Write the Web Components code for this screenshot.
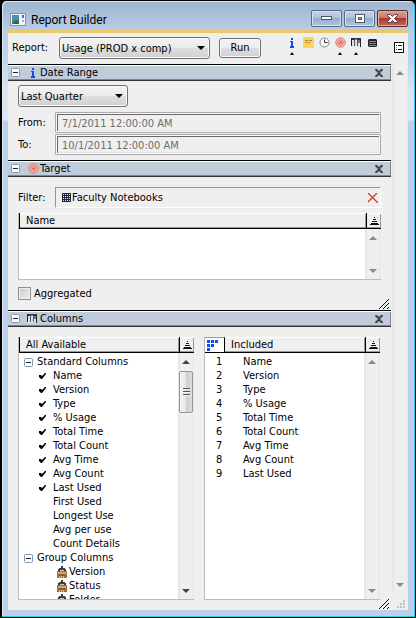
<!DOCTYPE html>
<html lang="en">
<head>
<meta charset="utf-8">
<title>Report Builder</title>
<style>
  html, body { height: 100%; margin: 0; background: #000; }
  body { font: 11px/14px Tahoma, "DejaVu Sans Condensed", "Open Sans", sans-serif; color: #000; }
</style>
</head>
<body>
<report-window></report-window>

<script>
const define = (name, html, setup) => {
  const tpl = document.createElement('template');
  tpl.innerHTML = `<style>*{box-sizing:border-box}:host{box-sizing:border-box}</style>` + html;
  customElements.define(name, class extends HTMLElement {
    connectedCallback() {
      if (this.shadowRoot) return;
      const root = this.attachShadow({ mode: 'open' });
      root.append(tpl.content.cloneNode(true));
      if (setup) setup(this, root);
    }
  });
};

const rect = (x, y, w, h, f) => `<rect x="${x}" y="${y}" width="${w}" height="${h}" fill="${f}"/>`;
const ICONS = {
  app: [16, 14, `<rect x=".5" y=".5" width="15" height="12" fill="#eef4f8" stroke="#8b9199"/><rect x="2" y="2" width="7" height="9" fill="#3f7f78"/><path d="M2 2h7v3l-4 4-3-2z" fill="#4d8fae"/><path d="M3 11l3-4 3 3v1z" fill="#2f6a3d"/>${rect(12,2,2,3,'#446eb5')}${rect(12,7,2,2,'#9fb1c9')}`],
  info: [6, 10, `${rect(2,0,2,2,'#0a4cf5')}${rect(1,3,3,1,'#0a4cf5')}${rect(2,3,2,6,'#0a4cf5')}${rect(1,9,4,1,'#0a4cf5')}${rect(1,8,4,1,'#0a4cf5')}`],
  note: [11, 11, `${rect(0,0,11,11,'#fad55a')}<path d="M2 3.5h3M6 3.5h3M2 5.500h2M5 5.500h2" stroke="#9b8646"/>`],
  clock: [11, 11, `<circle cx="5.5" cy="5.5" r="4.5" fill="#fafafa" stroke="#858585"/><path d="M5.500 2.500v3h3" fill="none" stroke="#333"/>`],
  target: [11, 11, `<circle cx="5.500" cy="5.500" r="4.700" fill="#f5c8c0" stroke="#df6a5d"/><circle cx="5.500" cy="5.500" r="2.700" fill="#f7d5cf" stroke="#db6254"/><circle cx="5.500" cy="5.500" r="1.200" fill="#d4473a"/>`],
  columns: [10, 9, `${rect(0,0,10,9,'#e0e0e8')}${rect(0,0,10,2,'#353542')}${rect(4,1,2,1,'#7b8fc0')}${rect(0,0,1,8,'#1c1c22')}${rect(3,2,1,6,'#55555f')}${rect(6,2,1,6,'#55555f')}${rect(9,1,1,8,'#24242a')}${rect(7,2,2,3,'#7b7b86')}`],
  stack: [9, 8, `<path d="M1 0h7l1 1v6l-1 1H1L0 7V1z" fill="#25202e"/>${rect(1,2,7,1,'#8f889c')}${rect(1,4,7,1,'#8f889c')}${rect(1,6,7,1,'#8f889c')}`],
  list: [10, 11, `<rect x=".5" y=".5" width="9" height="10" fill="#fff" stroke="#111"/>${rect(2,3,1,1,'#111')}${rect(4,3,4,1,'#111')}${rect(2,5,1,1,'#999')}${rect(2,7,1,1,'#111')}${rect(4,7,4,1,'#111')}`],
  minus: [9, 9, `<rect x=".5" y=".5" width="8" height="8" rx="1" fill="#fdfdfd" stroke="#829bb5"/>${rect(2,4,5,1,'#222')}`],
  close: [8, 8, `<path d="M0 0h2l2 2 2-2h2v1L5 4l3 3v1H6L4 6 2 8H0V7l3-3-3-3z" fill="#454545"/>`],
  delete: [10, 10, `<path d="M0 0l10 10M9 0L0 9" stroke="#d9341f" stroke-width="1.300"/>`],
  grid: [9, 9, `${rect(0,0,9,9,'#20243f')}${[1,3,5,7].map(y => [1,3,5,7].map(x => rect(x,y,1,1,'#dfe3f0')).join('')).join('')}`],
  sort: [9, 8, `${rect(4,0,1,1,'#111')}${rect(3,2,3,1,'#111')}${rect(2,4,5,1,'#111')}${rect(1,6,7,1,'#111')}${rect(0,7,9,1,'#111')}`],
  check: [7, 6, `<path d="M0 2h2l1 1 3-3h1v1L3 6H2L0 4z" fill="#000"/>`],
  up: [8, 4, `<path d="M4 0l4 4H0z" fill="currentColor"/>`],
  down: [8, 4, `<path d="M0 0h8L4 4z" fill="currentColor"/>`],
  tick: [4, 3, `<path d="M2 0l2 3H0z" fill="#000"/>`],
  grip: [10, 10, `<path d="M0 10L10 0M4 10l6-6M8 10l2-2" stroke="#111" fill="none"/>`],
  dots: [8, 8, [[6,0],[3,3],[6,3],[0,6],[3,6],[6,6]].map(p => rect(p[0],p[1],2,2,'#c2c2c2')).join('')],
  blocks: [11, 11, [[0,0],[4,0],[8,0],[0,4],[4,4],[0,8]].map(p => rect(p[0],p[1],3,3,'#0a4cf5')).join('')],
  lock: [10, 12, `<path d="M1 3h1V2h2V0h2v2h2v1h1v2H1z" fill="#3c3c40"/>${rect(3,4,4,1,'#c8cacd')}${rect(0,5,10,7,'#a06f3b')}${rect(1,6,8,2,'#d9a566')}${rect(2,8,6,2,'#8a5c30')}${rect(2,10,1,2,'#e3b67c')}${rect(4,10,1,2,'#e3b67c')}${rect(6,10,1,2,'#e3b67c')}`],
  min: [11, 5, `<rect x=".5" y=".5" width="10" height="3" fill="#fff" stroke="#4b5968"/>`],
  max: [10, 9, `<rect x=".5" y=".5" width="9" height="8" fill="#fff" stroke="#4b5968"/><rect x="3.500" y="3.500" width="3" height="2" fill="#8fa6c2" stroke="#4b5968"/>`],
  x: [11, 9, `<path d="M.5.5h3l2 2 2-2h3v1l-3 3 3 3v1h-3l-2-2-2 2h-3v-1l3-3-3-3z" fill="#fff" stroke="#5b3a3f"/>`]
};

define('ui-icon', `<style>:host{display:inline-flex;flex:none}svg{display:block}</style>`, (el, root) => {
  const [w, h, body] = ICONS[el.getAttribute('name')];
  root.innerHTML += `<svg width="${w}" height="${h}" viewBox="0 0 ${w} ${h}" aria-hidden="true">${body}</svg>`;
});

define('title-bar', `<style>
  :host{display:flex;align-items:flex-start;height:28px;padding:8px 0 0;gap:5px}
  ui-icon{margin:3px 0 0 2px}
  h1{margin:0;flex:1;font:12px/20px Roboto,sans-serif}
  div{display:flex;gap:2px;padding:0 1px}
  button{width:31px;height:17px;padding:0;border:1px solid #566a83;border-radius:2px;display:grid;place-items:center;
    background:linear-gradient(#c3d2e4,#afc2d8 48%,#94aecb 50%,#b0c6df);box-shadow:inset 0 0 0 1px #d5e1ee}
  button ui-icon{margin:0}
  .x{background:linear-gradient(#d9a096,#c87567 48%,#ab3a28 50%,#c16a58);box-shadow:inset 0 0 0 1px #e0ada5;border-color:#5a2c30}
</style>
<ui-icon name="app"></ui-icon><h1><slot></slot></h1>
<div><button aria-label="Minimize"><ui-icon name="min"></ui-icon></button><button aria-label="Maximize"><ui-icon name="max"></ui-icon></button><button class="x" aria-label="Close"><ui-icon name="x"></ui-icon></button></div>`);

const selectBox = (id, text, label) => `<span class="sel"><select id="${id}" ${label}><option>${text}</option></select><ui-icon name="down"></ui-icon></span>`;
const selectCss = `.sel{display:inline-grid;align-items:center}
  .sel>*{grid-area:1/1}
  .sel ui-icon{justify-self:end;margin-right:5px;pointer-events:none}
  select{appearance:none;width:100%;height:22px;margin:0;padding:2px 18px 0 2px;font:inherit;color:#000;border:1px solid #6f6f6f;border-radius:3px;
    background:linear-gradient(#f3f3f3,#ebebeb 48%,#dddddd 52%,#d1d1d1);box-shadow:inset 0 0 0 1px #fafafa}`;

define('report-toolbar', `<style>
  :host{display:flex;align-items:flex-start;height:31px;padding:4px 4px 0 4px}
  ${selectCss}
  label{line-height:22px;width:47px}
  .sel{width:151px}
  .run{width:42px;height:20px;margin:1px auto 0 9px;padding:0;font:inherit;border:1px solid #6f6f6f;border-radius:3px;
    background:linear-gradient(#f3f3f3,#ebebeb 48%,#dddddd 52%,#d1d1d1);box-shadow:inset 0 0 0 1px #fafafa}
  .tools{display:flex;gap:2px}
  .tools button,.menu{display:grid;grid-template-rows:11px 3px;row-gap:4px;justify-items:center;align-items:center;width:14px;padding:0;border:0;background:none}
  .menu{grid-template-rows:11px;margin:5px 0 0 15px;width:10px}
</style>
<label for="report">Report:</label>${selectBox('report', 'Usage (PROD x comp)', '')}
<button class="run">Run</button>
<div class="tools">
<button aria-label="Date range"><ui-icon name="info"></ui-icon><ui-icon name="tick"></ui-icon></button>
<button aria-label="Note"><ui-icon name="note"></ui-icon></button>
<button aria-label="Time"><ui-icon name="clock"></ui-icon></button>
<button aria-label="Target"><ui-icon name="target"></ui-icon><ui-icon name="tick"></ui-icon></button>
<button aria-label="Columns"><ui-icon name="columns"></ui-icon><ui-icon name="tick"></ui-icon></button>
<button aria-label="Data"><ui-icon name="stack"></ui-icon></button>
</div>
<button class="menu" aria-label="Options"><ui-icon name="list"></ui-icon></button>`);

define('panel-section', `<style>
  :host{display:flex;flex-direction:column;position:relative}
  header{display:flex;align-items:center;height:17px;flex:none;border-top:1px solid #000;border-bottom:1px solid #333;
    background:#c1ccda;box-shadow:inset 0 1px #fff,inset -1px -1px #858585;padding:0 8px 0 3px}
  button{display:grid;padding:0;border:0;background:none}
  .glyph{width:20px;display:flex;justify-content:flex-end;padding-right:1px}
  :host([icon=info]) .glyph{padding-right:4px}
  :host([icon=columns]) .glyph{padding-right:3px}
  h2{margin:0;flex:1;font:inherit;padding-top:1px}
  .body{padding:0 10px;flex:1;min-height:0;display:flex;flex-direction:column}
  .grip{position:absolute;right:2px;bottom:1px}
  .grip[hidden]{display:none}
</style>
<header><button aria-label="Collapse"><ui-icon name="minus"></ui-icon></button><span class="glyph"></span><h2></h2><button aria-label="Close"><ui-icon name="close"></ui-icon></button></header>
<div class="body"><slot></slot></div><ui-icon class="grip" name="grip"></ui-icon>`, (el, root) => {
  root.querySelector('h2').textContent = el.getAttribute('heading');
  root.querySelector('.glyph').innerHTML = `<ui-icon name="${el.getAttribute('icon')}"></ui-icon>`;
  root.querySelector('.grip').hidden = !el.hasAttribute('resizable');
});

define('scroll-track', `<style>
  :host{display:flex;flex-direction:column;align-items:center;width:16px;flex:none;padding:7px 0 6px;
    background:linear-gradient(90deg,#e3e3e3,#efefef 3px,#efefef 13px,#e8e8e8);color:#8a8a8a;overflow:hidden}
  :host([thumb]){color:#444}
  .thumb{display:none;width:14px;height:42px;margin-top:7px;border:1px solid #969696;border-radius:2px;
    background:linear-gradient(90deg,#f5f5f5,#e6e6e6 50%,#cecece 52%,#dcdcdc);place-items:center}
  :host([thumb]) .thumb{display:grid}
  .thumb i{width:7px;height:8px;background:repeating-linear-gradient(#555 0 1px,#f4f4f4 1px 2px,transparent 2px 3px)}
  .sp{flex:1}
</style><ui-icon name="up"></ui-icon><span class="thumb"><i></i></span><span class="sp"></span><ui-icon name="down"></ui-icon>`);

define('date-range', `<style>
  :host{display:grid;grid-template-columns:37px 1fr;row-gap:1px;padding:4px 0 5px}
  ${selectCss}
  .sel{grid-column:1/-1;width:110px;margin-bottom:4px}
  label{line-height:22px;height:21px}
  input{width:100%;min-width:0;height:21px;font:inherit;color:#6d6d6d;-webkit-text-fill-color:#6d6d6d;background:#efefef;padding:1px 6px 0;
    border:1px solid #a9a9a9;border-radius:1px;box-shadow:inset 0 0 0 1px #fafafa,inset 2px 2px #696969,inset -2px -2px #e3e3e3}
</style>${selectBox('range', 'Last Quarter', 'aria-label="Date range"')}
<label for="from">From:</label><input id="from" value="7/1/2011 12:00:00 AM" disabled>
<label for="to">To:</label><input id="to" value="10/1/2011 12:00:00 AM" disabled>`);

define('list-frame', `<style>
  :host{display:flex;flex-direction:column;min-width:0;min-height:0;border-left:1px solid #bbb;border-bottom:1px solid #bbb;background:#fff}
  header{display:flex;height:16px;flex:none;border-bottom:1px solid #000;background:#efefef}
  .lead{display:none;width:20px;padding:2px;border-right:1px solid #000;background:#fff;border-top:1px solid #999}
  :host([ordered]) .lead{display:block}
  .name{flex:1;padding:1px 0 0 6px;border-left:1px solid #000;border-right:1px solid #000;box-shadow:inset 0 1px #fff,inset -1px -1px #999}
  :host([ordered]) .name{border-left:0}
  button{width:14px;padding:0;border:0;background:#efefef;display:grid;place-items:center;box-shadow:inset 0 1px #fff,inset -1px -1px #999}
  .body{display:flex;flex:1;min-height:0}
  .content{flex:1;min-width:0;overflow:hidden;padding-top:2px}
</style>
<header><span class="lead"><ui-icon name="blocks"></ui-icon></span><span class="name"></span><button aria-label="Sort"><ui-icon name="sort"></ui-icon></button></header>
<div class="body"><div class="content"><slot></slot></div><scroll-track></scroll-track></div>`, (el, root) => {
  root.querySelector('.name').textContent = el.getAttribute('heading');
  root.querySelector('scroll-track').toggleAttribute('thumb', el.hasAttribute('thumb'));
});

define('target-form', `<style>
  :host{display:flex;flex-direction:column;padding:10px 0}
  .filter{display:flex;line-height:22px;height:21px}
  .filter>span{width:37px}
  .value{flex:1;height:21px;display:flex;align-items:center;gap:1px;padding:0 2px 0 6px;
    border:solid;border-width:1px;border-color:#969696 #fff #fff #969696}
  a{flex:1;color:#000;text-decoration:none}
  button{padding:0;border:0;background:none;display:grid}
  list-frame{height:67px;margin:5px 0 7px}
  .agg{display:flex;align-items:center;gap:3px;height:13px}
  input{appearance:none;width:13px;height:13px;margin:0;border:1px solid #8e8f8f;background:linear-gradient(135deg,#c9c9c9,#f2f2f2);background-clip:content-box;padding:1px}
  label{line-height:14px}
</style>
<div class="filter"><span>Filter:</span><div class="value"><ui-icon name="grid"></ui-icon><a href="#">Faculty Notebooks</a><button aria-label="Remove filter"><ui-icon name="delete"></ui-icon></button></div></div>
<list-frame heading="Name"></list-frame>
<div class="agg"><input type="checkbox" id="agg"><label for="agg">Aggregated</label></div>`);

define('column-tree', `<style>
  :host{display:block}
  ul{list-style:none;margin:0;padding:0}
  .group{display:flex;align-items:center;height:14px;padding-left:5px;gap:4px}
  button{display:grid;padding:0;border:0;background:none}
  li li{display:flex;align-items:center;height:14px}
  .mark{width:34px;display:flex;padding-left:20px;flex:none}
  .deep .mark{width:50px;padding-left:38px}
</style><ul></ul>`, (el, root) => {
  const group = (name, rows, cls) => `<li><div class="group"><button aria-label="Collapse ${name}"><ui-icon name="minus"></ui-icon></button>${name}</div><ul class="${cls}">${rows.map(([t, i]) => `<li><span class="mark">${i ? `<ui-icon name="${i}"></ui-icon>` : ''}</span>${t}</li>`).join('')}</ul></li>`;
  root.querySelector('ul').innerHTML =
    group('Standard Columns', [...['Name','Version','Type','% Usage','Total Time','Total Count','Avg Time','Avg Count','Last Used'].map(t => [t, 'check']),
      ...['First Used','Longest Use','Avg per use','Count Details'].map(t => [t])], '') +
    group('Group Columns', ['Version','Status','Folder'].map(t => [t, 'lock']), 'deep');
});

define('included-columns', `<style>
  :host{display:block}
  table{border-collapse:collapse;width:100%}
  td{padding:0;height:14px}
  td:first-child{width:38px;padding-left:11px}
</style><table><tbody></tbody></table>`, (el, root) => {
  root.querySelector('tbody').innerHTML = ['Name','Version','Type','% Usage','Total Time','Total Count','Avg Time','Avg Count','Last Used']
    .map((t, i) => `<tr><td>${i + 1}</td><td>${t}</td></tr>`).join('');
});

define('column-picker', `<style>
  :host{display:grid;grid-template-columns:1fr 1fr;grid-template-rows:minmax(0,1fr);gap:10px;flex:1;min-height:0;padding:10px 1px 10px 0}
</style>
<list-frame heading="All Available" thumb><column-tree></column-tree></list-frame>
<list-frame heading="Included" ordered><included-columns></included-columns></list-frame>`);

define('report-window', `<style>
  :host{display:flex;flex-direction:column;height:100vh;min-height:400px;padding:1px 6px 6px;border:1px solid #000;border-width:1px 1px 1px 2px;border-radius:6px 6px 0 0;
    background:linear-gradient(#9db4ce,#bacde5 30px,#bfd3ea 58px,#d8e6f4 90px,#dbe8f5 118px,#bcd1e9 121px,#bcd1e9);
    box-shadow:inset -1px -1px #35c4e8,inset 1px 1px #dce7f2}
  main{flex:1;min-height:0;display:flex;flex-direction:column;background:#efefef;border-top:3px solid #e9c86b;margin-right:1px;margin-bottom:1px}
  .row{flex:1;min-height:0;display:flex}
  .sections{flex:1;min-width:0;display:flex;flex-direction:column}
  .grow{flex:1;min-height:0}
  .side{display:flex;flex-direction:column;width:17px;align-items:center}
  .side scroll-track{flex:1}
  .side ui-icon{padding:7px 0 2px 2px}
</style>
<title-bar>Report Builder</title-bar>
<main>
<report-toolbar></report-toolbar>
<div class="row"><div class="sections">
<panel-section heading="Date Range" icon="info"><date-range></date-range></panel-section>
<panel-section heading="Target" icon="target" resizable><target-form></target-form></panel-section>
<panel-section class="grow" heading="Columns" icon="columns" resizable><column-picker></column-picker></panel-section>
</div><div class="side"><scroll-track></scroll-track><ui-icon name="dots"></ui-icon></div></div>
</main>`);
</script>
</body>
</html>
